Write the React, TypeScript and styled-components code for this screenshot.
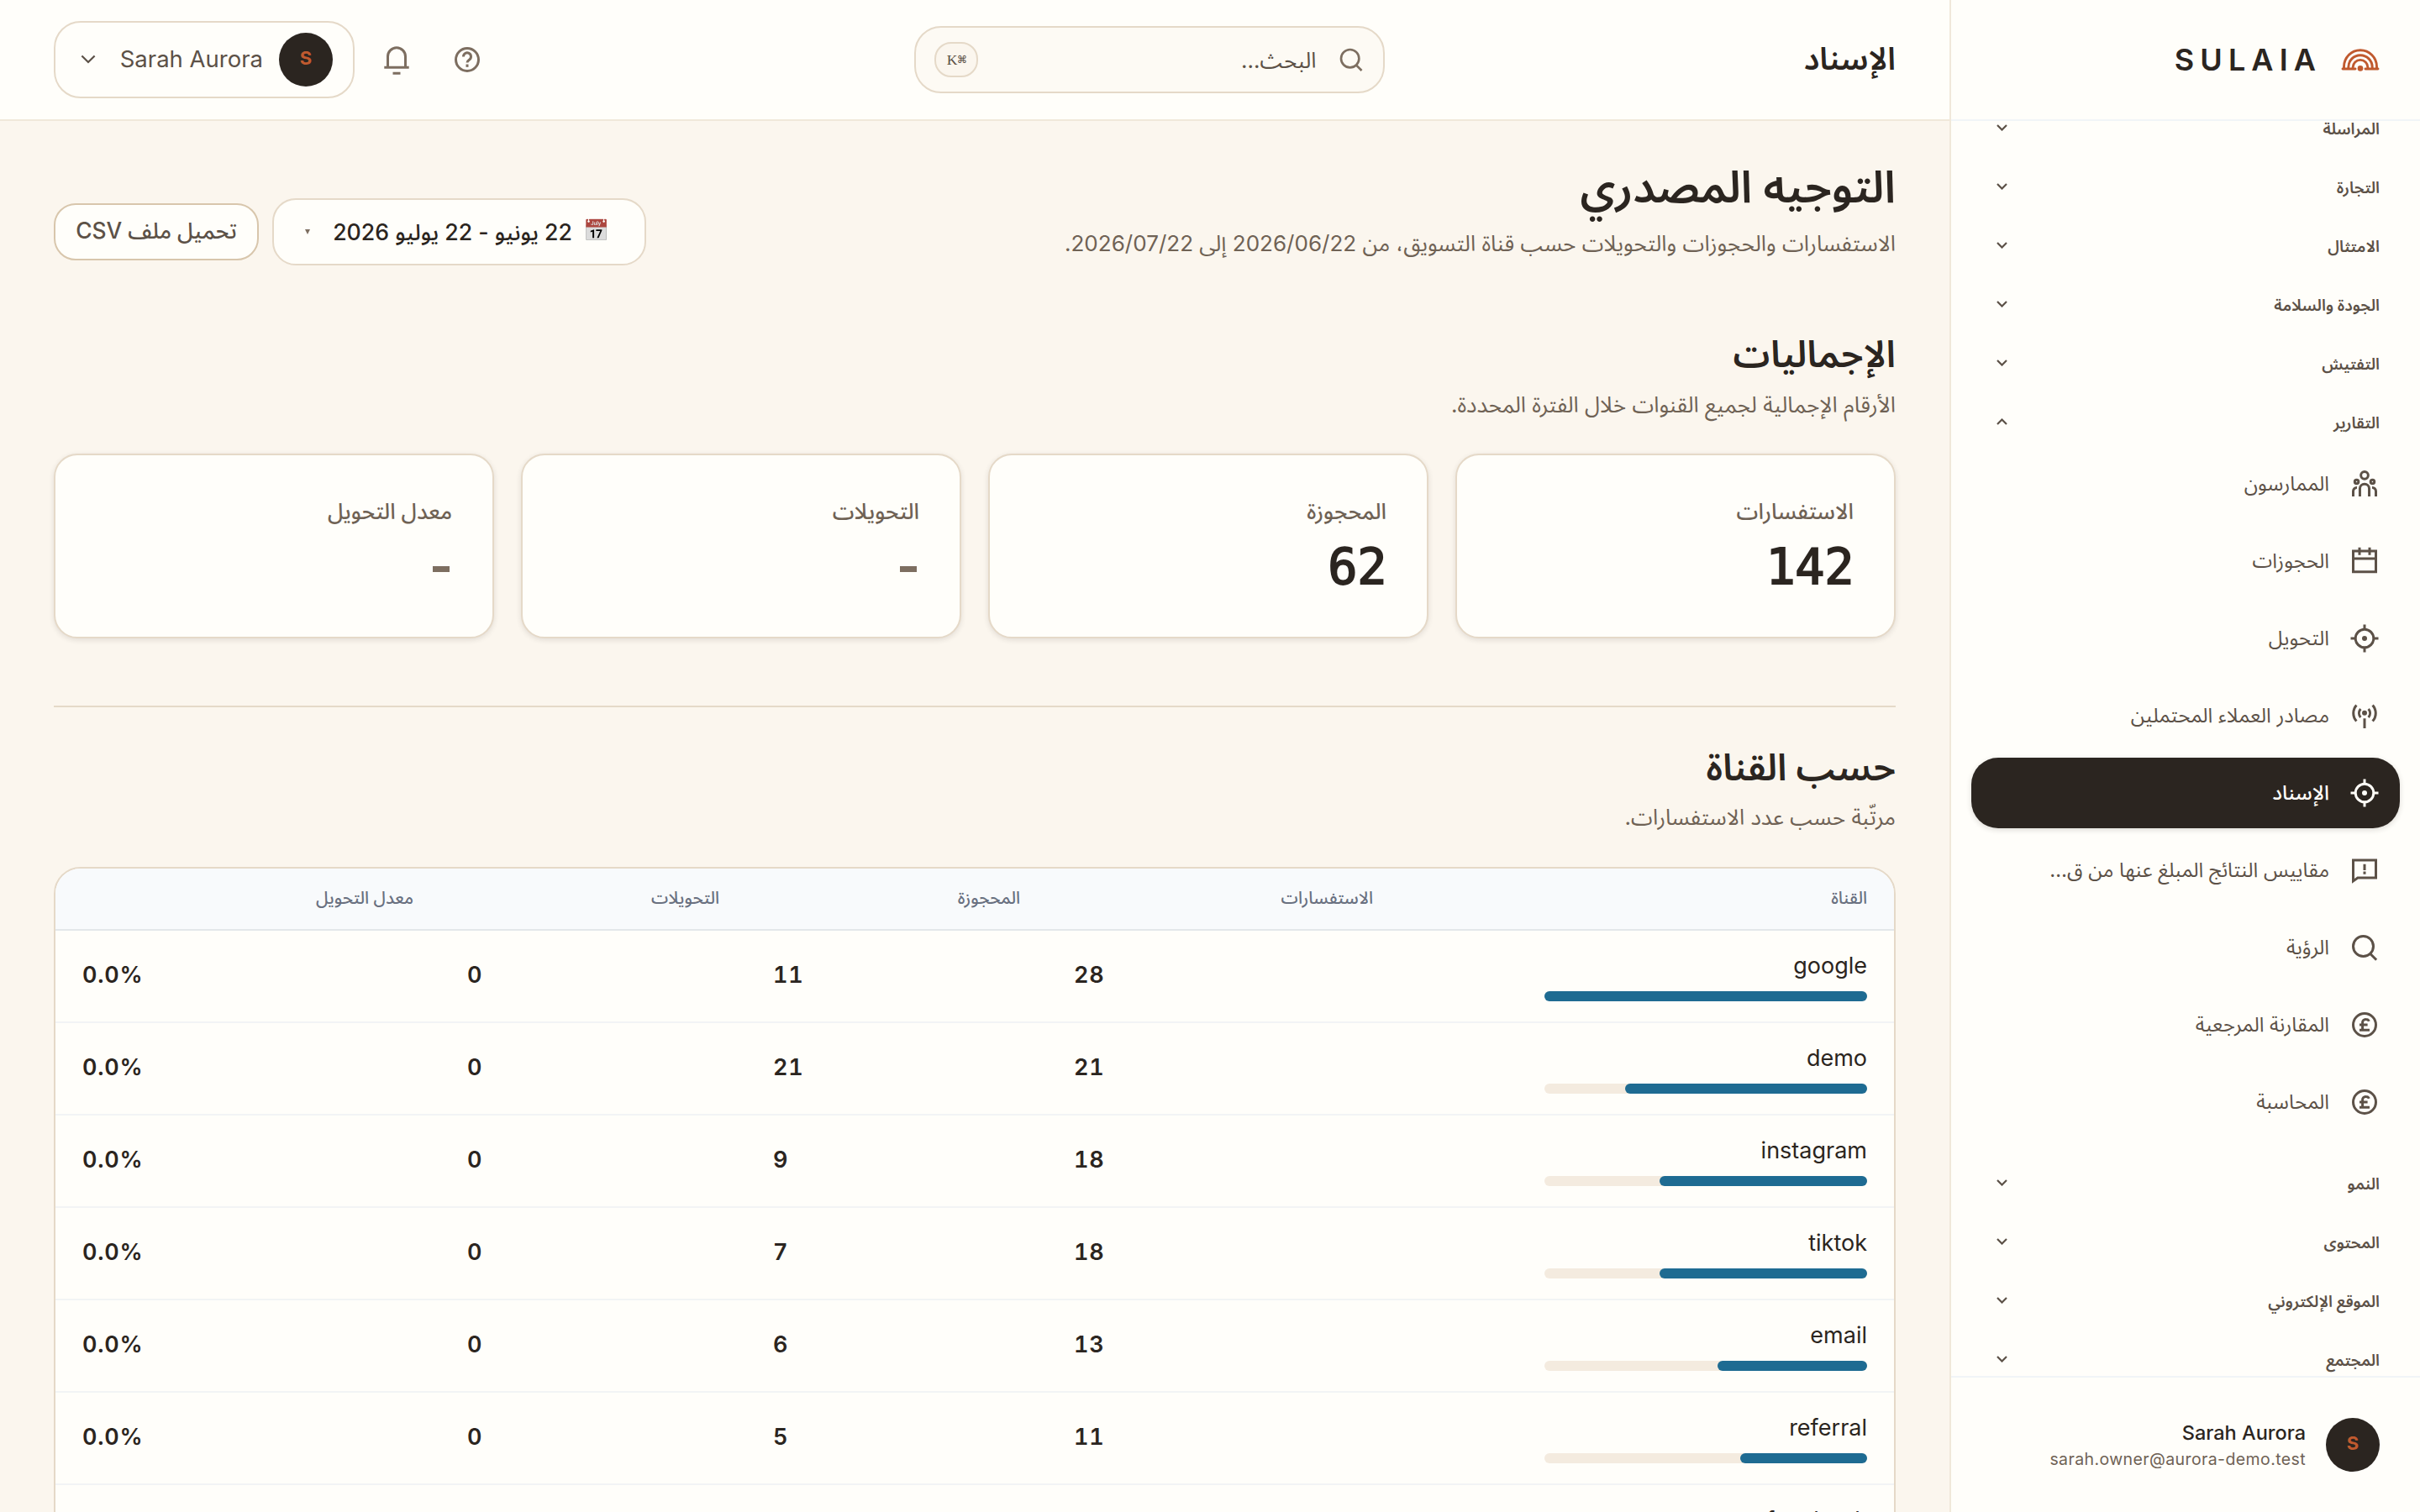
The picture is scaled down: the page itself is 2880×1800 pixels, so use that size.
import React from "react";
import styled, { createGlobalStyle, css } from "styled-components";

const c = {
  page: "#fbf6ee",
  panel: "#fffefa",
  line: "#e5d9c8",
  softLine: "#f0e8da",
  coolLine: "#f1f5f7",
  ink: "#2b2520",
  mid: "#5c5147",
  muted: "#6f6255",
  icon: "#7d6e60",
  accent: "#c05a2f",
  blue: "#1e6b92",
};

const sans = `Inter, "Noto Sans Arabic", "Noto Sans", sans-serif`;

const GlobalStyle = createGlobalStyle`
  *, *::before, *::after { box-sizing: border-box; }
  body { margin: 0; background: ${c.page}; font-family: ${sans}; color: ${c.ink}; -webkit-font-smoothing: antialiased; }
  h1, h2, p { margin: 0; }
`;

const Shell = styled.div`
  display: flex;
  height: 1800px;
  width: 2880px;
  overflow: hidden;
`;

/* ---------- sidebar ---------- */

const Sidebar = styled.aside`
  flex: none;
  width: 560px;
  display: flex;
  flex-direction: column;
  background: ${c.panel};
  border-left: 2px solid ${c.softLine};
`;

const Brand = styled.div`
  flex: none;
  height: 144px;
  padding: 0 48px;
  display: flex;
  align-items: center;
  gap: 23px;
  border-bottom: 2px solid ${c.coolLine};
`;

const Wordmark = styled.span`
  direction: ltr;
  font-size: 36px;
  font-weight: 600;
  line-height: 44px;
  letter-spacing: 7.1px;
`;

const NavViewport = styled.nav`
  flex: 1;
  min-height: 0;
  overflow: hidden;
  padding: 0 24px;
`;

const NavList = styled.div`
  margin-top: -24px;
  display: flex;
  flex-direction: column;
  gap: 6px;
`;

const GroupRow = styled.div`
  flex: none;
  height: 64px;
  padding: 0 24px;
  display: flex;
  align-items: center;
  justify-content: space-between;
  color: ${c.mid};
  font-size: 19px;
  font-weight: 600;
  line-height: 28px;
`;

const GroupLabel = styled.span`
  padding-top: 3px;
`;

const GroupItems = styled.div`
  display: flex;
  flex-direction: column;
  gap: 8px;
  margin: -6px 0 16px;
`;

const Item = styled.div<{ $active?: boolean }>`
  height: 84px;
  padding: 0 24px;
  display: flex;
  align-items: center;
  gap: 24px;
  border-radius: 32px;
  color: ${c.mid};
  font-size: 24px;
  line-height: 40px;
  ${(p) =>
    p.$active &&
    css`
      background: ${c.ink};
      color: #fffdf8;
      font-weight: 500;
      box-shadow: 0 2px 6px rgba(43, 37, 32, 0.16);
    `}
`;

const ItemLabel = styled.span`
  width: 340px;
  overflow: hidden;
  text-overflow: ellipsis;
  white-space: nowrap;
`;

const Account = styled.div`
  flex: none;
  height: 162px;
  padding: 0 48px;
  display: flex;
  align-items: center;
  gap: 24px;
  border-top: 2px solid ${c.coolLine};
`;

const Avatar = styled.span`
  flex: none;
  width: 64px;
  height: 64px;
  border-radius: 50%;
  display: flex;
  align-items: center;
  justify-content: center;
  padding-bottom: 4px;
  background: ${c.ink};
  color: ${c.accent};
  font-size: 22px;
  font-weight: 700;
`;

const AccountText = styled.div`
  padding-top: 1px;
  display: flex;
  flex-direction: column;
  align-items: flex-start;
`;

const AccountName = styled.span`
  font-size: 23.5px;
  font-weight: 500;
  line-height: 32px;
`;

const AccountMail = styled.span`
  font-size: 19.5px;
  letter-spacing: 0.4px;
  line-height: 30px;
  color: ${c.muted};
`;

/* ---------- top bar ---------- */

const Main = styled.div`
  flex: 1;
  min-width: 0;
  display: flex;
  flex-direction: column;
`;

const TopBar = styled.header`
  flex: none;
  height: 144px;
  padding: 0 64px;
  display: flex;
  align-items: center;
  justify-content: space-between;
  background: ${c.panel};
  border-bottom: 2px solid ${c.softLine};
`;

const PageName = styled.span`
  padding-bottom: 3px;
  font-size: 37.2px;
  font-weight: 600;
  line-height: 48px;
`;

const Search = styled.div`
  width: 560px;
  height: 80px;
  padding: 0 22px;
  display: flex;
  align-items: center;
  gap: 26px;
  border: 2px solid ${c.line};
  border-radius: 32px;
  background: #fdfaf4;
  color: ${c.icon};
`;

const Placeholder = styled.span`
  flex: 1;
  padding-top: 1px;
  font-size: 26px;
  line-height: 40px;
  color: ${c.mid};
`;

const Kbd = styled.kbd`
  width: 52px;
  height: 42px;
  display: flex;
  align-items: center;
  justify-content: center;
  direction: rtl;
  border: 2px solid ${c.line};
  border-radius: 20px;
  background: ${c.page};
  color: ${c.mid};
  font-family: "Liberation Serif", "DejaVu Sans Mono", serif;
  font-size: 17.5px;
`;

const TopActions = styled.div`
  display: flex;
  align-items: center;
  gap: 16px;
`;

const IconButton = styled.span`
  width: 68px;
  height: 64px;
  display: flex;
  align-items: center;
  justify-content: center;
  color: ${c.icon};
`;

const UserPill = styled.div`
  width: 358px;
  height: 92px;
  padding: 0 24px 0 30px;
  display: flex;
  align-items: center;
  border: 2px solid ${c.line};
  border-radius: 32px;
`;

const UserName = styled.span`
  margin: 0 19px 2px auto;
  font-size: 27.5px;
  line-height: 40px;
  color: ${c.mid};
`;

const PillChevron = styled.span`
  display: flex;
  margin-right: auto;
  color: ${c.mid};
`;

/* ---------- content ---------- */

const Content = styled.main`
  flex: 1;
  min-height: 0;
  overflow: hidden;
  padding: 40px 64px 0;
`;

const PageHead = styled.div`
  height: 184px;
  margin-bottom: 23px;
  display: flex;
  align-items: center;
  justify-content: space-between;
`;

const TitleBlock = styled.div`
  align-self: flex-start;
  padding-top: 2px;
`;

const Title = styled.h1`
  font-size: 52.8px;
  font-weight: 600;
  line-height: 72px;
`;

const Lead = styled.p<{ $top?: number }>`
  margin-top: ${(p) => p.$top ?? 0}px;
  font-size: 26.05px;
  line-height: 40px;
  color: ${c.muted};
`;

const HeadActions = styled.div`
  display: flex;
  align-items: center;
  gap: 16px;
`;

const DateRange = styled.div`
  width: 445px;
  height: 80px;
  padding: 0 42px 0 37px;
  display: flex;
  align-items: center;
  border: 2px solid ${c.line};
  border-radius: 28px;
  background: ${c.panel};
  font-size: 26.7px;
  font-weight: 500;
  line-height: 40px;
`;

const Emoji = styled.span`
  width: 30px;
  margin: 0 0 4px 14px;
  font-size: 25px;
  line-height: 40px;
  filter: saturate(0.65) brightness(0.88);
`;

const Caret = styled.span`
  margin-right: auto;
  width: 0;
  height: 0;
  border: 3px solid transparent;
  border-top: 6px solid ${c.icon};
  border-bottom: 0;
`;

const OutlineButton = styled.button`
  width: 244px;
  height: 68px;
  padding: 0 0 4px;
  border: 2px solid #d8c6ac;
  border-radius: 26px;
  background: ${c.panel};
  color: ${c.mid};
  font-family: inherit;
  font-size: 26.4px;
  font-weight: 500;
  line-height: 40px;
`;

const SectionTitle = styled.h2`
  font-size: 44px;
  font-weight: 600;
  line-height: 60px;
`;

const Cards = styled.div`
  margin-top: 38px;
  display: grid;
  grid-template-columns: repeat(4, 1fr);
  gap: 32px;
`;

const Card = styled.div`
  height: 220px;
  padding: 47px 48px 0;
  border: 2px solid ${c.line};
  border-radius: 28px;
  background: ${c.panel};
  box-shadow: 0 2px 6px rgba(43, 37, 32, 0.12);
`;

const CardLabel = styled.div`
  font-size: 26px;
  font-weight: 500;
  line-height: 40px;
  color: ${c.muted};
`;

const CardValue = styled.div`
  margin-top: 8px;
  font-family: "DejaVu Sans Mono", monospace;
  font-size: 58.5px;
  line-height: 76px;
  letter-spacing: -0.4px;
  -webkit-text-stroke: 1.8px currentColor;
  color: ${c.ink};
`;

const Dash = styled.span`
  display: block;
  width: 20px;
  height: 7px;
  margin: 45px 3px 0;
  background: ${c.icon};
`;

const Divider = styled.hr`
  height: 2px;
  margin: 80px 0 41px;
  border: 0;
  background: ${c.line};
`;

const Table = styled.div`
  margin-top: 39px;
  height: 1100px;
  border: 2px solid ${c.line};
  border-radius: 32px;
  overflow: hidden;
  background: ${c.panel};
`;

const gridCols = css`
  display: grid;
  grid-template-columns: 588px 420px 358px 364px 458px;
  align-items: center;
`;

const HeadRow = styled.div`
  ${gridCols}
  height: 74px;
  background: #f8fafc;
  border-bottom: 2px solid #e3e7ea;
`;

const HeadCell = styled.span`
  padding: 0 32px 3px;
  font-size: 20.4px;
  font-weight: 500;
  line-height: 32px;
  color: #697080;
`;

const Row = styled.div`
  ${gridCols}
  height: 110px;
  border-bottom: 2px solid #f2f4f5;
`;

const Channel = styled.div`
  padding: 0 32px;
  font-size: 27px;
  line-height: 40px;
`;

const Track = styled.div`
  width: 384px;
  height: 12px;
  margin: 10px 0 2px;
  border-radius: 6px;
  background: #f4ebdf;
`;

const Fill = styled.div`
  height: 100%;
  border-radius: 6px;
  background: ${c.blue};
`;

const NumCell = styled.span`
  padding: 0 32px 3px;
  direction: ltr;
  text-align: left;
  font-size: 27px;
  font-weight: 600;
  line-height: 40px;
  letter-spacing: 0.8px;
  font-variant-numeric: tabular-nums;
`;

/* ---------- icons ---------- */

const Svg = styled.svg`
  flex: none;
  display: block;
  fill: none;
  stroke: currentColor;
  stroke-width: 2;
`;

const Icon = ({ size = 36, children }: { size?: number; children: React.ReactNode }) => (
  <Svg width={size} height={size} viewBox="0 0 24 24">{children}</Svg>
);

const People = (
  <>
    <circle cx="12" cy="5.2" r="2.9" />
    <path d="M8.300 22v-6.200a3.700 3.700 0 0 1 7.400 0V22" />
    <circle cx="5.700" cy="10.400" r="1.500" />
    <circle cx="18.300" cy="10.400" r="1.500" />
    <path d="M3 22v-4.200a2.800 2.800 0 0 1 3-2.800M21 22v-4.200a2.800 2.800 0 0 0-3-2.800" />
  </>
);
const Calendar = <path d="M3 4h18v16.5H3zM3 10h18M8 1.2v6M16 1.2v6" />;
const Target = (
  <>
    <circle cx="12" cy="12" r="7.2" />
    <path d="M12 1v4M12 19v4M1 12h4M19 12h4" />
    <circle cx="12" cy="12" r="2" fill="currentColor" stroke="none" />
  </>
);
const Antenna = (
  <>
    <path d="M5.6 3.6a9.6 9.6 0 0 0 0 12.8M18.4 3.6a9.6 9.6 0 0 1 0 12.8M8.9 6.6a5.2 5.2 0 0 0 0 6.8M15.1 6.6a5.2 5.2 0 0 1 0 6.8M12 14.2v7.8" />
    <circle cx="12" cy="9.9" r="2" fill="currentColor" stroke="none" />
  </>
);
const Message = (
  <>
    <path d="M3 4h18v14H6.6L3 20.6z" />
    <path d="M12 7.2V12M12 13v2.1" />
  </>
);
const Lens = (
  <>
    <circle cx="11" cy="11" r="8" />
    <path d="M16.4 16.8l5 5" />
  </>
);
const Pound = (
  <>
    <circle cx="12" cy="12" r="9" />
    <path d="M15.6 9.2C15.2 8.2 14.2 7.6 13 7.6a2.5 2.5 0 0 0-2.6 2.6v5.9M8 16.2h8M8 12h6.4" />
  </>
);

const Chevron = ({ up, size = 13, width = 2.2 }: { up?: boolean; size?: number; width?: number }) => (
  <svg width={size} height={size * 0.62} viewBox="0 0 13 8" fill="none" stroke="currentColor" strokeWidth={width}>
    <path d={up ? "M1 7l5.5-5.5L12 7" : "M1 1l5.5 5.5L12 1"} />
  </svg>
);

const GroupChevron = styled.span`
  display: flex;
  width: 24px;
  justify-content: center;
`;

const Logo = () => (
  <svg width="46" height="27" viewBox="0 0 45 27" fill="none" stroke={c.accent} strokeWidth="2.9" strokeLinecap="round">
    <path d="M1.5 24h15M28.5 24h15" />
    <path d="M3 23.5v-2.2a19.5 19.5 0 0 1 39 0v2.2" />
    <path d="M8.3 23.5v-1.6a14.2 14.2 0 0 1 28.4 0v1.6" />
    <path d="M13.6 23.5v-1.2a8.9 8.9 0 0 1 17.8 0v1.2" />
    <circle cx="22.5" cy="23.4" r="3.3" fill={c.accent} stroke="none" />
  </svg>
);

/* ---------- data ---------- */

const groupsTop = ["المراسلة", "التجارة", "الامتثال", "الجودة والسلامة", "التفتيش"];
const groupsBottom = ["النمو", "المحتوى", "الموقع الإلكتروني", "المجتمع"];
const items: { label: string; icon: React.ReactNode; active?: boolean }[] = [
  { label: "الممارسون", icon: People },
  { label: "الحجوزات", icon: Calendar },
  { label: "التحويل", icon: Target },
  { label: "مصادر العملاء المحتملين", icon: Antenna },
  { label: "الإسناد", icon: Target, active: true },
  { label: "مقاييس النتائج المبلغ عنها من ق…", icon: Message },
  { label: "الرؤية", icon: Lens },
  { label: "المقارنة المرجعية", icon: Pound },
  { label: "المحاسبة", icon: Pound },
];
const cards = [
  { label: "الاستفسارات", value: "142" },
  { label: "المحجوزة", value: "62" },
  { label: "التحويلات", value: null },
  { label: "معدل التحويل", value: null },
];
const columns = ["القناة", "الاستفسارات", "المحجوزة", "التحويلات", "معدل التحويل"];
const rows: [string, number, number][] = [
  ["google", 28, 11],
  ["demo", 21, 21],
  ["instagram", 18, 9],
  ["tiktok", 18, 7],
  ["email", 13, 6],
  ["referral", 11, 5],
  ["facebook", 9, 3],
];
const peak = 28;

const Group = ({ label, open }: { label: string; open?: boolean }) => (
  <GroupRow>
    <GroupLabel>{label}</GroupLabel>
    <GroupChevron><Chevron up={open} /></GroupChevron>
  </GroupRow>
);

export default function App() {
  return (
    <Shell dir="rtl">
      <GlobalStyle />
      <Sidebar>
        <Brand>
          <Logo />
          <Wordmark>SULAIA</Wordmark>
        </Brand>
        <NavViewport>
          <NavList>
            {groupsTop.map((g) => <Group key={g} label={g} />)}
            <Group label="التقارير" open />
            <GroupItems>
              {items.map((it) => (
                <Item key={it.label} $active={it.active}>
                  <Icon>{it.icon}</Icon>
                  <ItemLabel>{it.label}</ItemLabel>
                </Item>
              ))}
            </GroupItems>
            {groupsBottom.map((g) => <Group key={g} label={g} />)}
          </NavList>
        </NavViewport>
        <Account>
          <Avatar>S</Avatar>
          <AccountText>
            <AccountName>Sarah Aurora</AccountName>
            <AccountMail>sarah.owner@aurora-demo.test</AccountMail>
          </AccountText>
        </Account>
      </Sidebar>

      <Main>
        <TopBar>
          <PageName>الإسناد</PageName>
          <Search>
            <Icon size={32}>{Lens}</Icon>
            <Placeholder>البحث...</Placeholder>
            <Kbd>⌘K</Kbd>
          </Search>
          <TopActions>
            <IconButton>
              <Icon>
                <circle cx="12" cy="12" r="9" />
                <path d="M9 9.6a3 3 0 1 1 4.6 2.5c-1 .7-1.6 1.1-1.6 2.3" />
                <path d="M12 15.7v2.2" />
              </Icon>
            </IconButton>
            <IconButton>
              <Icon>
                <path d="M2.2 18.2h19.6M5 18V9.5a7 7 0 0 1 14 0V18M9 22.8h6" />
              </Icon>
            </IconButton>
            <UserPill>
              <Avatar>S</Avatar>
              <UserName>Sarah Aurora</UserName>
              <PillChevron><Chevron size={18} width={1.6} /></PillChevron>
            </UserPill>
          </TopActions>
        </TopBar>

        <Content>
          <PageHead>
            <TitleBlock>
              <Title>التوجيه المصدري</Title>
              <Lead $top={12}>الاستفسارات والحجوزات والتحويلات حسب قناة التسويق، من 2026/06/22 إلى 2026/07/22.</Lead>
            </TitleBlock>
            <HeadActions>
              <DateRange>
                <Emoji>📅</Emoji>
                <span>22 يونيو - 22 يوليو 2026</span>
                <Caret />
              </DateRange>
              <OutlineButton>تحميل ملف CSV</OutlineButton>
            </HeadActions>
          </PageHead>

          <SectionTitle>الإجماليات</SectionTitle>
          <Lead $top={11}>الأرقام الإجمالية لجميع القنوات خلال الفترة المحددة.</Lead>
          <Cards>
            {cards.map((k) => (
              <Card key={k.label}>
                <CardLabel>{k.label}</CardLabel>
                {k.value ? <CardValue>{k.value}</CardValue> : <Dash />}
              </Card>
            ))}
          </Cards>

          <Divider />

          <SectionTitle>حسب القناة</SectionTitle>
          <Lead $top={10}>مرتّبة حسب عدد الاستفسارات.</Lead>
          <Table>
            <HeadRow>
              {columns.map((h) => <HeadCell key={h}>{h}</HeadCell>)}
            </HeadRow>
            {rows.map(([name, enq, booked]) => (
              <Row key={name}>
                <Channel>
                  {name}
                  <Track><Fill style={{ width: `${(enq / peak) * 100}%` }} /></Track>
                </Channel>
                <NumCell>{enq}</NumCell>
                <NumCell>{booked}</NumCell>
                <NumCell>0</NumCell>
                <NumCell>0.0%</NumCell>
              </Row>
            ))}
          </Table>
        </Content>
      </Main>
    </Shell>
  );
}
